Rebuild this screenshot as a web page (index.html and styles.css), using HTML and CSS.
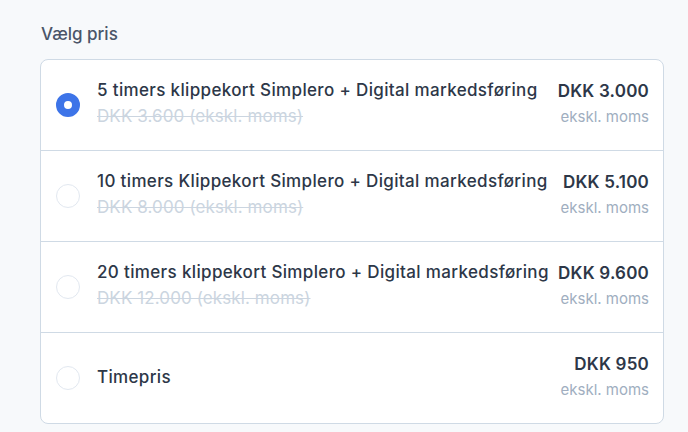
FILE: index.html
```html
<!DOCTYPE html>
<html lang="da">
<head>
  <meta charset="UTF-8">
  <meta name="viewport" content="width=device-width, initial-scale=1.0">
  <title>Vælg pris</title>
  <link rel="stylesheet" href="styles.css">
</head>
<body>
  <div class="field">
    <div class="field-label">Vælg pris</div>

    <!-- price options -->
    <div class="options">
      <label class="option">
        <span class="radio checked"></span>
        <span class="info">
          <span class="title">5 timers klippekort Simplero + Digital markedsføring</span>
          <span class="old">DKK 3.600 (ekskl. moms)</span>
        </span>
        <span class="price">
          <span class="amount">DKK 3.000</span>
          <span class="vat">ekskl. moms</span>
        </span>
      </label>

      <label class="option">
        <span class="radio"></span>
        <span class="info">
          <span class="title">10 timers Klippekort Simplero + Digital markedsføring</span>
          <span class="old">DKK 8.000 (ekskl. moms)</span>
        </span>
        <span class="price">
          <span class="amount">DKK 5.100</span>
          <span class="vat">ekskl. moms</span>
        </span>
      </label>

      <label class="option">
        <span class="radio"></span>
        <span class="info">
          <span class="title">20 timers klippekort Simplero + Digital markedsføring</span>
          <span class="old">DKK 12.000 (ekskl. moms)</span>
        </span>
        <span class="price">
          <span class="amount">DKK 9.600</span>
          <span class="vat">ekskl. moms</span>
        </span>
      </label>

      <label class="option">
        <span class="radio"></span>
        <span class="info">
          <span class="title">Timepris</span>
        </span>
        <span class="price">
          <span class="amount">DKK 950</span>
          <span class="vat">ekskl. moms</span>
        </span>
      </label>
    </div>
  </div>
</body>
</html>
```

FILE: styles.css
```css
body {
  margin: 0;
  font-family: Inter, "Noto Sans", sans-serif;
  background-color: #f7f9fb;
  color: #2d3748;
}
.field {
  padding: 22px 24px 0 40px;
}
.field-label {
  font-size: 17px;
  font-weight: 500;
  color: #4a5568;
  line-height: 24px;
  padding-left: 1px;
  margin-bottom: 13px;
}
.options {
  background: #fff;
  border: 1px solid #cfdae5;
  border-radius: 8px;
}
.option {
  display: flex;
  align-items: center;
  height: 90px;
  padding: 0 14px 0 15px;
  border-top: 1px solid #cfdae5;
  cursor: pointer;
}
.option:first-child {
  border-top: none;
}
.radio {
  flex: none;
  width: 22px;
  height: 22px;
  border: 1px solid #e2e8f0;
  border-radius: 50%;
  margin-right: 17px;
  box-sizing: content-box;
}
.radio.checked {
  width: 8px;
  height: 8px;
  border: 8px solid #3d74e8;
  background: #fff;
}
.info {
  flex: 1;
  min-width: 0;
  display: flex;
  flex-direction: column;
  padding-bottom: 2px;
}
.title {
  font-size: 17px;
  font-weight: 500;
  letter-spacing: 0.35px;
  line-height: 24px;
  white-space: nowrap;
  color: #2d3748;
}
.old {
  font-size: 17px;
  letter-spacing: 0.1px;
  line-height: 28px;
  color: #cbd5e0;
  text-decoration: line-through;
}
.price {
  flex: none;
  display: flex;
  flex-direction: column;
  align-items: flex-end;
  margin-left: 8px;
}
.amount {
  font-size: 17px;
  font-weight: 600;
  letter-spacing: 0.2px;
  line-height: 24px;
  color: #2d3748;
}
.vat {
  font-size: 15px;
  line-height: 28px;
  color: #a0aec0;
}
```
